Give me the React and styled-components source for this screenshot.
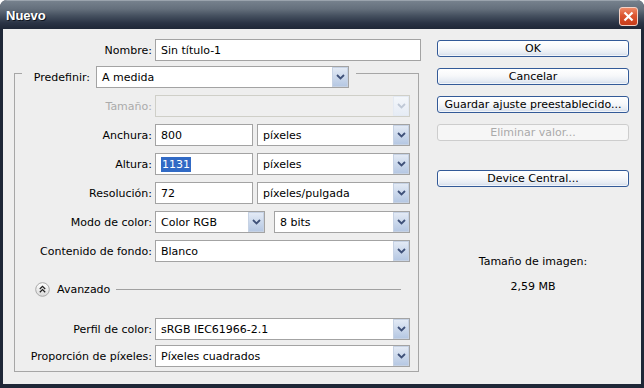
import React from 'react';
import styled, { createGlobalStyle } from 'styled-components';

// Dialogo "Nuevo" estilo Photoshop / Windows XP
const GlobalStyle = createGlobalStyle`
  *, *::before, *::after { box-sizing: border-box; }
  html, body { margin: 0; padding: 0; background: #ffffff; }
  body {
    font-family: "DejaVu Sans", "Liberation Sans", sans-serif;
    font-size: 11px;
    color: #000000;
  }
`;

const Window = styled.div`
  width: 644px;
  height: 388px;
  display: flex;
  flex-direction: column;
  overflow: hidden;
  border-radius: 7px 7px 0 0;
  background: #1f2737;
`;

const TitleBar = styled.div`
  height: 29px;
  flex: none;
  display: flex;
  align-items: center;
  justify-content: space-between;
  padding: 0 6px 0 6px;
  border-top: 1px solid #9aa3ad;
  background: linear-gradient(to bottom, #76818d 0px, #646f7c 8px, #444f5e 15px, #2a3345 22px, #1f2737 28px);
`;

const Title = styled.span`
  font-family: "Liberation Sans", Arial, sans-serif;
  font-weight: bold;
  font-size: 13px;
  color: #ffffff;
  text-shadow: 1px 1px 0 #0f1520;
`;

const CloseButton = styled.div`
  width: 19px;
  height: 19px;
  margin-top: 2px;
  border: 1px solid #f4d2c6;
  border-radius: 3px;
  background: linear-gradient(to bottom, #ee8a68 0%, #dc5530 45%, #c73c1a 100%);
  display: flex;
  align-items: center;
  justify-content: center;
`;

const Frame = styled.div`
  flex: 1;
  padding: 0 3px 4px 3px;
  display: flex;
`;

const Client = styled.div`
  flex: 1;
  display: flex;
  background: #eeeeee;
`;

const LeftColumn = styled.div`
  width: 420px;
  flex: none;
  padding-top: 10px;
`;

const RightColumn = styled.div`
  width: 192px;
  flex: none;
  margin-left: 14px;
  padding-top: 11px;
  display: flex;
  flex-direction: column;
  gap: 11px;
`;

const Row = styled.div`
  display: flex;
  align-items: center;
  height: 22px;
  gap: 3px;
`;

const Label = styled.span`
  width: ${p => p.$width}px;
  flex: none;
  text-align: right;
  white-space: nowrap;
  color: ${p => (p.$disabled ? '#ababab' : '#000000')};
`;

const TextBox = styled.div`
  width: ${p => p.$width}px;
  height: 22px;
  flex: none;
  display: flex;
  align-items: center;
  padding-left: 5px;
  background: #ffffff;
  border: 1px solid #a3a3a3;
  white-space: nowrap;
`;

const Selected = styled.span`
  background: #316ac5;
  color: #ffffff;
  padding: 1px 1px;
`;

const Combo = styled.div`
  width: ${p => p.$width}px;
  height: 22px;
  flex: none;
  display: flex;
  margin-left: ${p => p.$offset || 0}px;
  background: ${p => (p.$disabled ? '#efefef' : '#ffffff')};
  border: 1px solid ${p => (p.$disabled ? '#cfcfc8' : '#a3a3a3')};
`;

const ComboText = styled.span`
  flex: 1;
  display: flex;
  align-items: center;
  padding-left: 5px;
  white-space: nowrap;
  overflow: hidden;
`;

const ArrowButton = styled.div`
  width: 16px;
  flex: none;
  display: flex;
  align-items: center;
  justify-content: center;
  border: 1px solid ${p => (p.$disabled ? '#e4eaf3' : '#c6d2e4')};
  background: ${p =>
    p.$disabled
      ? 'linear-gradient(to bottom, #f3f6fa, #e6ecf5)'
      : 'linear-gradient(to bottom, #e3eaf5 0%, #ccd9ec 50%, #b6c8e3 100%)'};
`;

const Group = styled.div`
  width: 405px;
  margin: 12px 0 0 11px;
  border: 1px solid #a6a6a6;
  padding-bottom: 4px;
`;

const GroupHeader = styled.div`
  width: 334px;
  margin: -8px 0 0 7px;
  padding-right: 7px;
  display: flex;
  align-items: center;
  justify-content: flex-end;
  gap: 6px;
  height: 22px;
  background: #eeeeee;
`;

const FieldList = styled.div`
  display: flex;
  flex-direction: column;
  gap: ${p => p.$gap}px;
  margin-top: ${p => p.$top}px;
`;

const AdvancedRow = styled.div`
  display: flex;
  align-items: center;
  height: 16px;
  margin-top: 19px;
  padding: 0 17px 0 20px;
`;

const AdvancedText = styled.span`
  margin-left: 7px;
`;

const Rule = styled.div`
  flex: 1;
  height: 1px;
  margin-left: 6px;
  background: #a0a0a0;
`;

const Button = styled.div`
  height: 17px;
  display: flex;
  align-items: center;
  justify-content: center;
  border-radius: 3px;
  white-space: nowrap;
  border: 1px solid ${p => (p.$disabled ? '#cdcdcd' : '#335a98')};
  color: ${p => (p.$disabled ? '#aaaaaa' : '#000000')};
  background: ${p =>
    p.$disabled
      ? '#f6f6f6'
      : 'linear-gradient(to bottom, #ffffff 0%, #f7f8fa 45%, #e6ebf3 80%, #cfd9e9 100%)'};
  box-shadow: ${p => (p.$disabled ? 'none' : 'inset 0 0 0 1px rgba(255,255,255,0.7)')};
  margin-top: ${p => p.$top || 0}px;
`;

const Info = styled.div`
  margin-top: ${p => p.$top}px;
  text-align: center;
  line-height: 14px;
`;

const Chevron = ({ disabled }) => (
  <svg width="9" height="6" viewBox="0 0 9 6">
    <polyline
      points="1,1 4.5,4.5 8,1"
      fill="none"
      stroke={disabled ? '#bfc8d6' : '#3f5179'}
      strokeWidth="1.8"
    />
  </svg>
);

const ComboBox = ({ width, value, disabled, offset }) => (
  <Combo $width={width} $disabled={disabled} $offset={offset}>
    <ComboText>{value}</ComboText>
    <ArrowButton $disabled={disabled}>
      <Chevron disabled={disabled} />
    </ArrowButton>
  </Combo>
);

const CollapseIcon = () => (
  <svg width="15" height="15" viewBox="0 0 15 15">
    <defs>
      <linearGradient id="advGrad" x1="0" y1="0" x2="0" y2="1">
        <stop offset="0" stopColor="#ffffff" />
        <stop offset="1" stopColor="#d9d9d9" />
      </linearGradient>
    </defs>
    <circle cx="7.5" cy="7.5" r="6.8" fill="url(#advGrad)" stroke="#a8a8a8" />
    <polyline points="4.8,7 7.5,4.4 10.2,7" fill="none" stroke="#222" strokeWidth="1.3" />
    <polyline points="4.8,10.2 7.5,7.6 10.2,10.2" fill="none" stroke="#222" strokeWidth="1.3" />
  </svg>
);

const App = () => {
  return (
    <>
      <GlobalStyle />
      <Window>
        <TitleBar>
          <Title>Nuevo</Title>
          <CloseButton>
            <svg width="11" height="11" viewBox="0 0 11 11">
              <path d="M1.5 1.5 L9.5 9.5 M9.5 1.5 L1.5 9.5" stroke="#ffffff" strokeWidth="2.2" />
            </svg>
          </CloseButton>
        </TitleBar>
        <Frame>
          <Client>
            <LeftColumn>
              <Row>
                <Label $width={149}>Nombre:</Label>
                <TextBox $width={266}>Sin título-1</TextBox>
              </Row>

              <Group>
                <GroupHeader>
                  <Label>Predefinir:</Label>
                  <ComboBox width={253} value="A medida" />
                </GroupHeader>

                <FieldList $gap={7} $top={7}>
                  <Row>
                    <Label $width={137} $disabled>Tamaño:</Label>
                    <ComboBox width={255} value="" disabled />
                  </Row>
                  <Row>
                    <Label $width={137}>Anchura:</Label>
                    <TextBox $width={98}>800</TextBox>
                    <ComboBox width={153} value="píxeles" offset={1} />
                  </Row>
                  <Row>
                    <Label $width={137}>Altura:</Label>
                    <TextBox $width={98}><Selected>1131</Selected></TextBox>
                    <ComboBox width={153} value="píxeles" offset={1} />
                  </Row>
                  <Row>
                    <Label $width={137}>Resolución:</Label>
                    <TextBox $width={98}>72</TextBox>
                    <ComboBox width={153} value="píxeles/pulgada" offset={1} />
                  </Row>
                  <Row>
                    <Label $width={137}>Modo de color:</Label>
                    <ComboBox width={110} value="Color RGB" />
                    <ComboBox width={136} value="8 bits" offset={6} />
                  </Row>
                  <Row>
                    <Label $width={137}>Contenido de fondo:</Label>
                    <ComboBox width={255} value="Blanco" />
                  </Row>
                </FieldList>

                <AdvancedRow>
                  <CollapseIcon />
                  <AdvancedText>Avanzado</AdvancedText>
                  <Rule />
                </AdvancedRow>

                <FieldList $gap={5} $top={21}>
                  <Row>
                    <Label $width={137}>Perfil de color:</Label>
                    <ComboBox width={255} value="sRGB IEC61966-2.1" />
                  </Row>
                  <Row>
                    <Label $width={137}>Proporción de píxeles:</Label>
                    <ComboBox width={255} value="Píxeles cuadrados" />
                  </Row>
                </FieldList>
              </Group>
            </LeftColumn>

            <RightColumn>
              <Button>OK</Button>
              <Button>Cancelar</Button>
              <Button>Guardar ajuste preestablecido...</Button>
              <Button $disabled>Eliminar valor...</Button>
              <Button $top={18}>Device Central...</Button>
              <Info $top={57}>Tamaño de imagen:</Info>
              <Info $top={0}>2,59 MB</Info>
            </RightColumn>
          </Client>
        </Frame>
      </Window>
    </>
  );
};

export default App;
